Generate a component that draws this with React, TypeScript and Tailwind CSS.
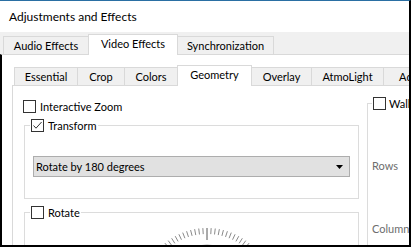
import React from 'react';

const CheckBox: React.FC<{ checked?: boolean }> = ({ checked = false }) => (
  <span className="w-[13px] h-[13px] border border-[#333333] bg-white flex items-center justify-center shrink-0">
    {checked && (
      <svg width="11" height="11" viewBox="0 0 11 11">
        <path d="M1.5 5.5 L4 8.2 L9.6 2" fill="none" stroke="#333333" strokeWidth="1" />
      </svg>
    )}
  </span>
);

const GroupTitle: React.FC<{ label: string; checked?: boolean; className?: string; gap?: string }> = ({
  label,
  checked,
  className = '',
  gap = 'gap-[4px]',
}) => (
  <legend className={`px-px bg-white ${className}`}>
    <span className={`flex items-center ${gap} h-[13px]`}>
      <CheckBox checked={checked} />
      <span>{label}</span>
    </span>
  </legend>
);

const outerTabs = [
  { label: 'Audio Effects', w: 'w-[86px]' },
  { label: 'Video Effects', w: 'w-[90px]', active: true },
  { label: 'Synchronization', w: 'w-[97px]' },
];

const innerTabs = [
  { label: 'Essential', w: 'w-[64px]' },
  { label: 'Crop', w: 'w-[48px]' },
  { label: 'Colors', w: 'w-[54px]' },
  { label: 'Geometry', w: 'w-[75px]', active: true },
  { label: 'Overlay', w: 'w-[61px]' },
  { label: 'AtmoLight', w: 'w-[73px]' },
  { label: 'Advanced', w: 'w-[80px]' },
];

// notches of the rotation dial, every 3.6 degrees
const Dial: React.FC = () => {
  const cx = 70;
  const cy = 72;
  const ticks = Array.from({ length: 100 }, (_, i) => i);
  return (
    <svg width="140" height="40" viewBox="0 0 140 40" className="block">
      <circle cx={cx} cy={cy} r="49" fill="#e3e3e3" stroke="#b4b4b4" strokeWidth="1" />
      {ticks.map((i) => {
        const a = ((i * 3.6 - 90) * Math.PI) / 180;
        const major = i === 0;
        const r1 = major ? 54 : 60;
        const r2 = 66;
        return (
          <line
            key={i}
            x1={cx + r1 * Math.cos(a)}
            y1={cy + r1 * Math.sin(a)}
            x2={cx + r2 * Math.cos(a)}
            y2={cy + r2 * Math.sin(a)}
            stroke={major ? '#555555' : '#8a8a8a'}
            strokeWidth="1"
          />
        );
      })}
    </svg>
  );
};

export default function App() {
  return (
    <div className="w-[411px] h-[247px] flex flex-col overflow-hidden bg-[#f0f0f0] border-t border-t-[#2a6fa3] border-r-2 border-r-black border-b-2 border-b-black font-['Lato',sans-serif] text-[11px] leading-[16px] text-black">
      {/* Title */}
      <div className="h-[31px] shrink-0 bg-white flex items-center pl-[9px] text-[12px]">Adjustments and Effects</div>

      {/* Outer tabs */}
      <div className="h-[22px] shrink-0 flex items-end pl-[3px]">
        {outerTabs.map((t, i) =>
          t.active ? (
            <div
              key={t.label}
              className={`${t.w} h-[21px] mb-[-1px] -ml-px relative z-10 bg-white border border-b-0 border-[#d9d9d9] flex items-center justify-center pb-[2px]`}
            >
              {t.label}
            </div>
          ) : (
            <div
              key={t.label}
              className={`${t.w} h-[18px] ${i > 0 ? '-ml-px' : ''} bg-[#f0f0f0] border border-b-0 border-[#d9d9d9] flex items-center justify-center`}
            >
              {t.label}
            </div>
          )
        )}
      </div>

      {/* Outer pane */}
      <div className="flex-1 min-h-0 bg-white border-t border-t-[#d9d9d9] border-l-2 border-l-black pl-[10px] pt-[10px] overflow-hidden">
        {/* Inner tabs */}
        <div className="h-[20px] flex items-end pl-[2px]">
          {innerTabs.map((t, i) =>
            t.active ? (
              <div
                key={t.label}
                className={`${t.w} shrink-0 h-[21px] mb-[-1px] -ml-px relative z-10 bg-white border border-b-0 border-[#d9d9d9] flex items-center justify-center pb-[2px]`}
              >
                {t.label}
              </div>
            ) : (
              <div
                key={t.label}
                className={`${t.w} shrink-0 h-[18px] ${i > 0 ? '-ml-px' : ''} bg-[#f0f0f0] border border-b-0 border-[#d9d9d9] flex items-center justify-center`}
              >
                {t.label}
              </div>
            )
          )}
        </div>

        {/* Inner pane */}
        <div className="w-[600px] h-[200px] border-t border-l border-[#d9d9d9] pl-[10px] pt-[14px] flex items-start">
          {/* Left column */}
          <div className="w-[336px] shrink-0 flex flex-col">
            <div className="h-[13px] flex items-center gap-[4px]">
              <CheckBox />
              <span>Interactive Zoom</span>
            </div>

            <fieldset className="ml-px mt-[6px] w-[335px] border border-[#dcdcdc] pl-[8px] pt-[24px] pb-[21px]">
              <GroupTitle label="Transform" checked className="ml-[-3px]" />
              <div className="w-[317px] h-[21px] bg-[#e1e1e1] border border-[#adadad] flex items-center justify-between pl-[2px] pr-[6px]">
                <span>Rotate by 180 degrees</span>
                <svg width="7" height="4" viewBox="0 0 7 4">
                  <path d="M0 0 H7 L3.5 4 Z" fill="#000000" />
                </svg>
              </div>
            </fieldset>

            <fieldset className="ml-px mt-[7px] w-[335px] h-[120px] border border-[#dcdcdc]">
              <GroupTitle label="Rotate" className="ml-[5px]" />
              <div className="ml-[112px] mt-[3px]">
                <Dial />
              </div>
            </fieldset>
          </div>

          {/* Right column */}
          <div className="ml-[8px] mt-[-3px] shrink-0">
            <fieldset className="w-[200px] h-[200px] border border-[#dcdcdc] pl-[4px] text-[#6d6d6d]">
              <GroupTitle label="Wall" className="text-black" gap="gap-[3px]" />
              <div className="mt-[48px]">Rows</div>
              <div className="mt-[47px]">Column</div>
            </fieldset>
          </div>
        </div>
      </div>
    </div>
  );
}
